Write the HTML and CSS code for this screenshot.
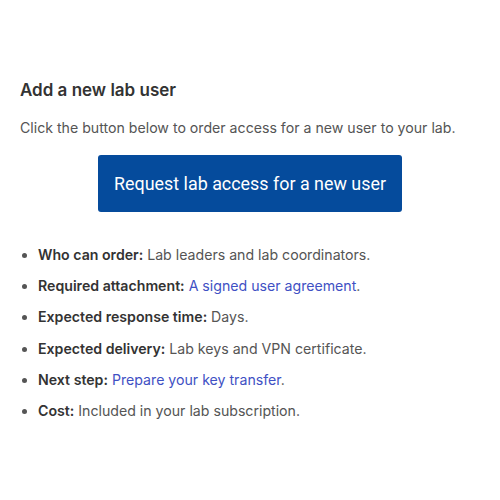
FILE: index.html
```html
<!DOCTYPE html>
<html>
<head>
<meta charset="utf-8">
<link rel="stylesheet" href="styles.css">
</head>
<body>
<main class="panel">
  <h2 class="title">Add a new lab user</h2>
  <p class="intro">Click the button below to order access for a new user to your lab.</p>
  <div class="action">
    <a class="btn" href="#">Request lab access for a new user</a>
  </div>
  <ul class="facts">
    <li><strong>Who can order:</strong> Lab leaders and lab coordinators.</li>
    <li><strong>Required attachment:</strong> <a href="#">A signed user agreement</a>.</li>
    <li><strong>Expected response time:</strong> Days.</li>
    <li><strong>Expected delivery:</strong> Lab keys and VPN certificate.</li>
    <li><strong>Next step:</strong> <a href="#">Prepare your key transfer</a>.</li>
    <li><strong>Cost:</strong> Included in your lab subscription.</li>
  </ul>
</main>
</body>
</html>
```
FILE: styles.css
```css
html, body {
  margin: 0;
  padding: 0;
  background: #ffffff;
}
body {
  font-family: Inter, "Noto Sans", sans-serif;
  color: #555555;
}
.panel {
  padding: 78px 20px 0 20px;
}
.title {
  margin: 0;
  font-size: 17px;
  font-weight: 600;
  color: #333333;
  line-height: 24px;
}
.intro {
  margin: 15px 0 0 0;
  font-size: 14.15px;
  line-height: 22px;
}
.action {
  display: flex;
  justify-content: center;
  margin-top: 16px;
}
.btn {
  display: flex;
  align-items: center;
  justify-content: center;
  width: 304px;
  height: 57px;
  background: #054b9c;
  color: #ffffff;
  border-radius: 3px;
  font-family: Roboto, sans-serif;
  font-size: 17.9px;
  text-decoration: none;
}
.facts {
  margin: 32px 0 0 0;
  padding: 0 0 0 18px;
  font-size: 14.15px;
  line-height: 22px;
}
.facts li {
  margin-bottom: 9.2px;
}
.facts strong {
  font-weight: 600;
  color: #333333;
}
.facts a {
  color: #3f51c4;
  text-decoration: none;
}
```
